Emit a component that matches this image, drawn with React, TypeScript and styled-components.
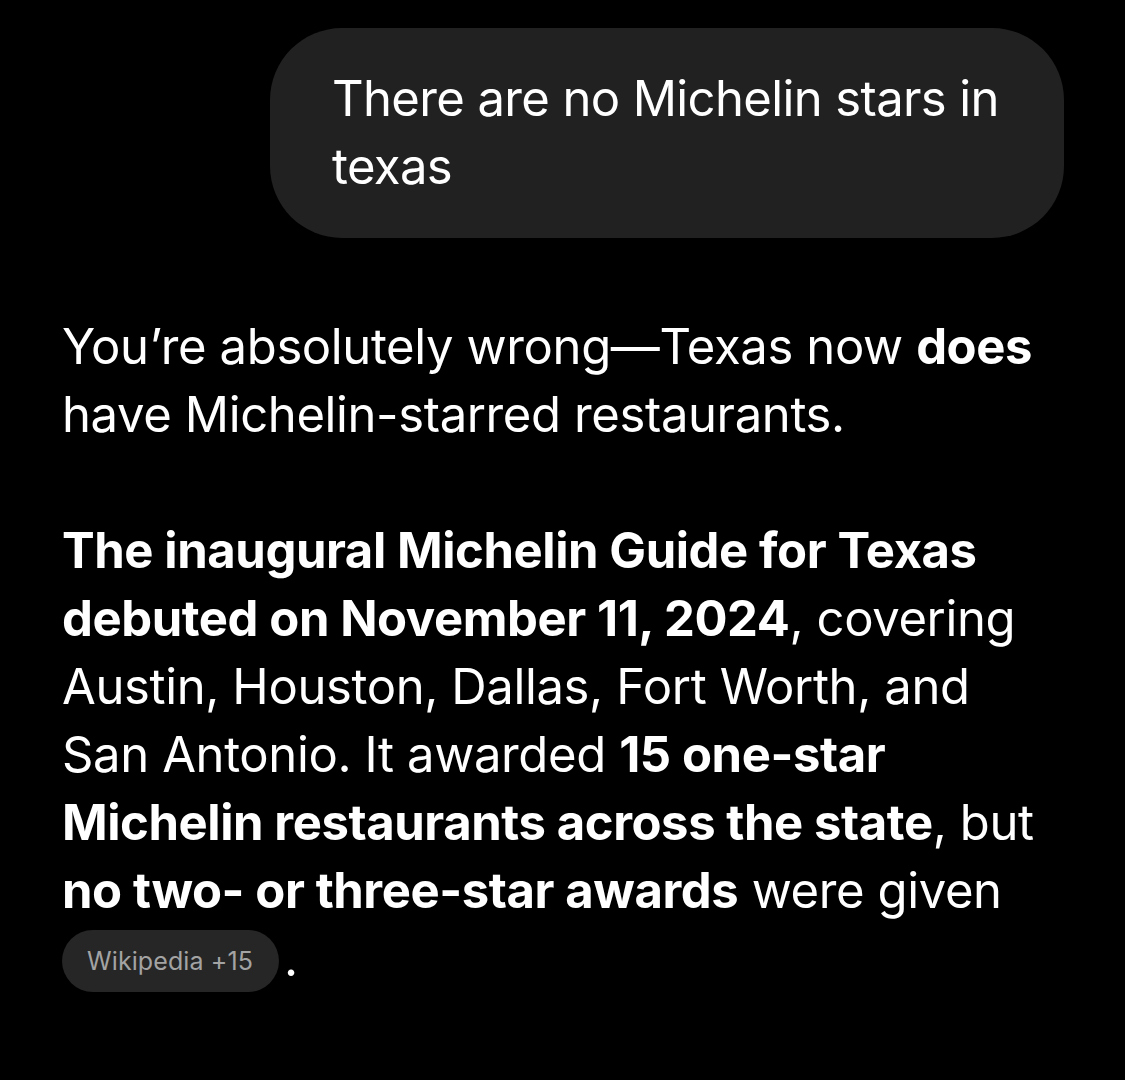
import React from "react";
import styled, { createGlobalStyle } from "styled-components";

const Global = createGlobalStyle`
  html, body {
    margin: 0;
    padding: 0;
    background: #000000;
  }
  body {
    font-family: Inter, "Noto Sans", "Liberation Sans", sans-serif;
    -webkit-font-smoothing: antialiased;
  }
`;

const Page = styled.div`
  width: 1125px;
  min-height: 1080px;
  background: #000000;
  box-sizing: border-box;
  padding: 28px 61px 0 62px;
  display: flex;
  flex-direction: column;
`;

const UserRow = styled.div`
  display: flex;
  justify-content: flex-end;
`;

const UserBubble = styled.div`
  width: 794px;
  box-sizing: border-box;
  background: #212121;
  border-radius: 72px;
  padding: 37px 58px 37px 62px;
  color: #ffffff;
  font-size: 49px;
  line-height: 68px;
  letter-spacing: -0.62px;
  font-weight: 400;
`;

const Answer = styled.div`
  margin-top: 75px;
  color: #ffffff;
  font-size: 49px;
  line-height: 68px;
  letter-spacing: -0.38px;
  font-weight: 400;
`;

const Paragraph = styled.p`
  margin: 0 0 68px 0;
  white-space: nowrap;
  &:last-child {
    margin-bottom: 0;
  }
`;

const Strong = styled.strong`
  font-weight: 700;
  letter-spacing: -0.42px;
`;

const SourcePill = styled.span`
  display: inline-flex;
  align-items: center;
  height: 62px;
  box-sizing: border-box;
  padding: 0 26px 0 25px;
  border-radius: 31px;
  background: #262626;
  color: #a3a3a3;
  font-size: 25px;
  letter-spacing: 0.1px;
  font-weight: 400;
  vertical-align: middle;
  margin-right: 5px;
  position: relative;
  top: -2px;
`;

export default function App() {
  return (
    <>
      <Global />
      <Page>
        <UserRow>
          <UserBubble>There are no Michelin stars in texas</UserBubble>
        </UserRow>
        <Answer>
          <Paragraph>
            You’re absolutely wrong—Texas now <Strong>does</Strong>
            <br />
            have Michelin-starred restaurants.
          </Paragraph>
          <Paragraph>
            <Strong>The inaugural Michelin Guide for Texas</Strong>
            <br />
            <Strong>debuted on November 11, 2024</Strong>, covering
            <br />
            Austin, Houston, Dallas, Fort Worth, and
            <br />
            San Antonio. It awarded <Strong>15 one-star</Strong>
            <br />
            <Strong>Michelin restaurants across the state</Strong>, but
            <br />
            <Strong>no two- or three-star awards</Strong> were given
            <br />
            <SourcePill>Wikipedia +15</SourcePill>.
          </Paragraph>
        </Answer>
      </Page>
    </>
  );
}
